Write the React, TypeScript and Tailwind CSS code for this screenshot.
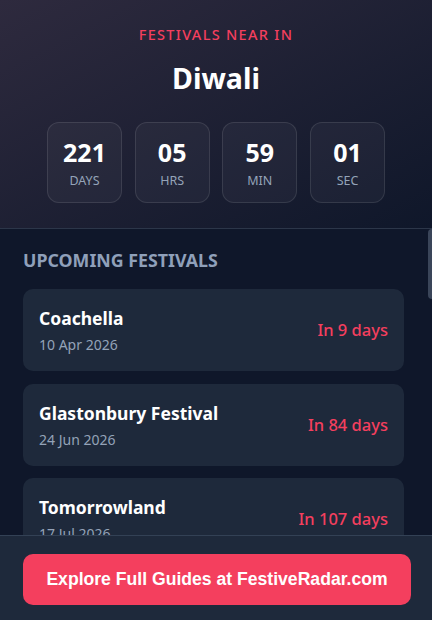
import React from "react";

const countdown = [
  { v: "221", l: "DAYS" },
  { v: "05", l: "HRS" },
  { v: "59", l: "MIN" },
  { v: "01", l: "SEC" },
];

const festivals = [
  { n: "Coachella", d: "10 Apr 2026", i: "In 9 days" },
  { n: "Glastonbury Festival", d: "24 Jun 2026", i: "In 84 days" },
  { n: "Tomorrowland", d: "17 Jul 2026", i: "In 107 days" },
  { n: "Lollapalooza", d: "30 Jul 2026", i: "In 120 days" },
  { n: "Sziget Festival", d: "11 Aug 2026", i: "In 132 days" },
];

export default function App() {
  return (
    <div className="h-[620px] w-[432px] flex flex-col bg-[#0f172a] font-['Noto_Sans',sans-serif] overflow-hidden">
      <div className="shrink-0 h-[229px] border-b border-[#2c3649] bg-gradient-to-br from-[#2e2a3e] to-[#0f172a] flex flex-col items-center pt-6">
        <div className="text-[14.5px] leading-5 font-medium tracking-[0.09em] text-[#f43f5e]">FESTIVALS NEAR IN</div>
        <div className="mt-4 text-[28.5px] leading-9 font-bold text-white">Diwali</div>
        <div className="mt-[26px] flex gap-[12.67px]">
          {countdown.map((c) => (
            <div
              key={c.l}
              className="w-[75px] h-[81px] rounded-xl border border-white/10 bg-white/[0.04] flex flex-col items-center justify-center"
            >
              <div className="text-[25px] leading-8 font-bold text-white">{c.v}</div>
              <div className="mt-[5px] text-[12.5px] leading-4 text-[#94a3b8]">{c.l}</div>
            </div>
          ))}
        </div>
      </div>
      <div className="relative flex-1 min-h-0 overflow-hidden">
        <div className="pl-[23px] pr-[28px] pt-5">
          <div className="text-[17.8px] leading-[22px] font-bold text-[#8fa0ba]">UPCOMING FESTIVALS</div>
          <div className="mt-[18px] flex flex-col gap-[12.5px]">
            {festivals.map((f) => (
              <div key={f.n} className="h-[82px] shrink-0 rounded-[10px] bg-[#1e293b] px-4 flex items-center justify-between">
                <div className="flex flex-col">
                  <div className="text-[17.5px] leading-[26px] font-bold text-white">{f.n}</div>
                  <div className="mt-1 text-[14px] leading-5 text-[#94a3b8]">{f.d}</div>
                </div>
                <div className="text-[16.5px] leading-6 font-medium text-[#f43f5e]">{f.i}</div>
              </div>
            ))}
          </div>
        </div>
        <div className="absolute right-0 top-0 h-[70px] w-[4px] rounded-l-sm bg-[#3a4559]" />
      </div>
      <div className="shrink-0 h-[85px] border-t border-[#334155] bg-[#1e293b] pl-[23px] pr-[21px] pt-[18px]">
        <div className="h-[51px] rounded-[10px] bg-[#f43f5e] flex items-center justify-center text-white font-bold text-[17.6px] font-['Liberation_Sans',Arial,sans-serif]">
          Explore Full Guides at FestiveRadar.com
        </div>
      </div>
    </div>
  );
}
